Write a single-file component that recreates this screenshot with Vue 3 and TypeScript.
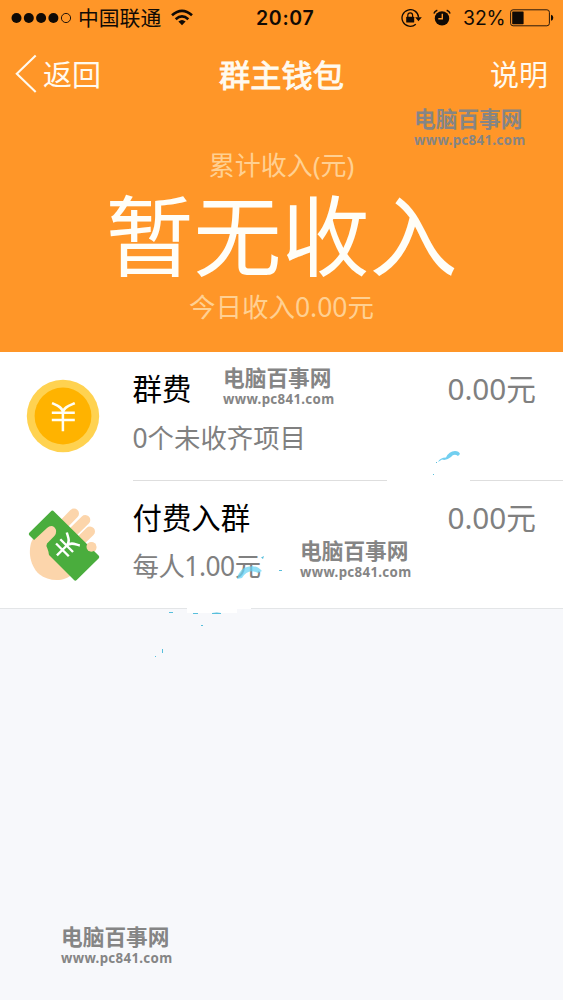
<script setup lang="ts">
interface Entry {
  kind: 'coin' | 'cash'
  title: string
  detail: string
  amount: string
}

interface Mark {
  left: number
  top: number
}

const entries: Entry[] = [
  { kind: 'coin', title: '群费', detail: '0个未收齐项目', amount: '0.00元' },
  { kind: 'cash', title: '付费入群', detail: '每人1.00元', amount: '0.00元' },
]

const marks: Mark[] = [
  { left: 414, top: 106 },
  { left: 223, top: 365 },
  { left: 300, top: 538 },
  { left: 61, top: 924 },
]
</script>

<template>
  <main class="screen">
    <header class="hero">
      <div class="status">
        <svg class="signal" width="62" height="14" viewBox="0 0 62 14">
          <circle v-for="i in 4" :key="i" :cx="5.5 + (i - 1) * 12.3" cy="7" r="5" />
          <circle cx="55" cy="7" r="4.6" fill="none" stroke="#24150a" stroke-width="1" />
        </svg>
        <span class="carrier">中国联通</span>
        <svg class="wifi" width="22" height="17" viewBox="0 0 22 17">
          <g fill="none" stroke="#100a05" stroke-width="2.7">
            <path d="M1 6.2 Q11 -2.5 21 6.2" />
            <path d="M4.7 10.2 Q11 4.7 17.3 10.2" />
          </g>
          <path d="M7.4 12.6 Q11 9.4 14.6 12.6 L11 16.2Z" />
        </svg>
        <time class="clock">20:07</time>
        <div class="indicators">
          <svg width="21" height="19" viewBox="0 0 21 19">
            <path d="M14.8 15.2 A8.3 8.3 0 1 1 17.6 8.4" fill="none" stroke="#100a05" stroke-width="1.3" />
            <path d="M14.1 8.2H20.8L17.5 12.2Z" />
            <rect x="5.2" y="7.7" width="8" height="5.8" rx=".6" />
            <path d="M6.8 8V6.3a2.4 2.4 0 0 1 4.8 0V8" fill="none" stroke="#100a05" stroke-width="1.2" />
          </svg>
          <svg class="alarm" width="18" height="18" viewBox="0 0 18 18">
            <circle cx="9" cy="9.4" r="7.2" />
            <path d="M.9 4.6 Q1.7 2.2 4.3 1.3M17.1 4.6 Q16.3 2.2 13.7 1.3" fill="none" stroke="#100a05" stroke-width="1.5" />
            <path d="M9.3 4.7V9.8H5.3" fill="none" stroke="#ff9628" stroke-width="1.4" />
          </svg>
          <span class="percent">32%</span>
          <svg class="battery" width="44" height="18" viewBox="0 0 44 18">
            <rect x=".6" y=".8" width="38.8" height="16" rx="2.5" fill="none" stroke="#2a190a" stroke-width="1" />
            <rect x="2.2" y="2.4" width="11.4" height="12.8" rx=".6" />
            <path d="M41 5.8q2.3.5 2.3 3t-2.3 3Z" />
          </svg>
        </div>
      </div>

      <nav class="nav">
        <div class="back">
          <svg width="22" height="40" viewBox="0 0 22 40">
            <path d="M20.7 1.5 1.8 19.8 20.7 38" fill="none" stroke="#fffaf0" stroke-width="2.1" />
          </svg>
          <span>返回</span>
        </div>
        <h1>群主钱包</h1>
        <span class="help">说明</span>
      </nav>

      <section class="income">
        <p class="caption">累计收入(元)</p>
        <p class="total">暂无收入</p>
        <p class="today">今日收入0.00元</p>
      </section>
    </header>

    <section class="list">
      <article v-for="entry in entries" :key="entry.title" class="row">
        <svg v-if="entry.kind === 'coin'" class="icon" width="76" height="76" viewBox="0 0 76 76">
          <circle cx="38" cy="38" r="36.2" fill="#ffd250" />
          <circle cx="38" cy="38" r="28.4" fill="#ffb300" />
          <path d="M27 25.2C31 27 37.8 28.8 37.9 35C38 28.8 45.8 27 49.8 25.2M26.8 34.7H49.8M26.8 42.1H49.8M37.9 34V53.2" fill="none" stroke="#fffef5" stroke-width="2.5" />
        </svg>
        <svg v-else class="icon cash" width="76" height="76" viewBox="0 0 76 76">
          <g stroke="#fcd5ab" stroke-width="10" stroke-linecap="round">
            <path d="M34 29 49 13.6M42 38 60.3 20M49 47 65 31.5M60 53 66.5 47.5" />
          </g>
          <path d="M9 37C2 47 4 65 14 74C24 82 40 82 47 74L27 37Z" fill="#fcd5ab" />
          <path d="M25.8 11.4Q27.4 9.8 29 11.4L73.8 55.8Q74.8 57 73.8 58.2L51.7 80Q50.3 81.3 49 80L4.3 35.2Q3.2 34 4.3 32.8Z" fill="#4aad3d" />
          <path d="M8 41 22 28Q26 24.4 29.6 27.4Q33 31 29.4 36L22 43.5Q20.6 46 22.4 48.4Q24 52 24 56L13 57Z" fill="#fcd5ab" />
          <circle cx="66.4" cy="46.8" r="4.9" fill="#fcd5ab" />
          <g transform="translate(40.4 46.9) rotate(45)">
            <path d="M-9.2-11.2C-6-9 0-8 0-1.6C0-8 6-9 9.2-11.2M-9-1.8H9M-9 4.2H9M0-2V12" fill="none" stroke="#fff" stroke-width="2.4" />
          </g>
        </svg>
        <div class="body">
          <div class="heading">
            <h2>{{ entry.title }}</h2>
            <span class="amount">{{ entry.amount }}</span>
          </div>
          <p class="detail" :class="entry.kind">{{ entry.detail }}</p>
        </div>
      </article>
    </section>

    <svg class="strokes" width="563" height="1000" viewBox="0 0 563 1000">
      <path d="M387 477H470V485H387ZM187 604H237V613H187ZM237 605H251V609H237Z" fill="#fff" />
      <path d="M438 462Q440 457.5 446 457.5Q449 451 455 451Q459 451 460 454L458 456Q454 453 451 457Q446 461 442 459.5Z" fill="#72cff0" />
      <path d="M237 579Q239 568 249 566.5Q257 565 262 571L258 573Q248 568 242 578Z" fill="#65d2f4" opacity=".72" />
      <path d="M261 557.5 264 556 263 559ZM279 570h3v1h-3ZM169 612h4v1h-4ZM193 613h5v1h-5ZM212 613q5-1 9 0v1h-9ZM201 625h2v1h-2ZM162 649h1v4h-1ZM155 656h1v1h-1ZM436 462h1v1h-1ZM433 474h1v1h-1Z" fill="#58bfdc" />
    </svg>

    <div
      v-for="mark in marks"
      :key="mark.top"
      class="mark"
      :style="{ left: `${mark.left}px`, top: `${mark.top}px` }"
    >
      <strong>电脑百事网</strong>
      <span>www.pc841.com</span>
    </div>
  </main>
</template>

<style>
body {
  margin: 0;
}
</style>

<style scoped>
.screen {
  position: relative;
  width: 563px;
  height: 1000px;
  overflow: hidden;
  background: #f7f8fb;
  font-family: "Noto Sans", "Noto Sans CJK SC", sans-serif;
  white-space: nowrap;
}

h1,
h2,
p {
  margin: 0;
  font-weight: 400;
}

svg {
  display: block;
  flex: none;
}

.hero {
  height: 352px;
  box-sizing: border-box;
  background: #ff9628;
  color: #fffaf0;
}

.status {
  height: 36px;
  display: grid;
  grid-template-columns: 67px 93px 96px 145px 1fr;
  align-items: center;
  padding-left: 11px;
  box-sizing: border-box;
  color: #100a05;
  fill: #100a05;
}

.carrier {
  font-size: 20.8px;
  line-height: 36px;
}

.wifi {
  margin-top: -1px;
}

.clock,
.percent {
  font-family: Inter, sans-serif;
}

.clock {
  font-size: 19.5px;
  font-weight: 600;
  margin-left: -11px;
  letter-spacing: 0.7px;
}

.indicators {
  display: flex;
  align-items: center;
  margin-left: -11px;
}

.alarm {
  margin-left: 11px;
}

.percent {
  font-size: 19.4px;
  margin-left: 12px;
  width: 47px;
  letter-spacing: -0.1px;
}

.nav {
  height: 76px;
  display: grid;
  grid-template-columns: 1fr 128px 1fr;
  align-items: center;
  padding: 0 15px;
}

.back {
  display: flex;
  align-items: center;
  font-size: 29px;
}

.back span {
  margin: -2px 0 0 6px;
}

h1 {
  font-size: 31.2px;
  -webkit-text-stroke: 0.9px #fffaf0;
  text-align: center;
  margin-top: -2px;
}

.help {
  font-size: 29px;
  text-align: right;
  margin-top: -2px;
}

.income {
  text-align: center;
}

.caption,
.today {
  color: #ffd092;
}

.caption {
  padding-top: 36px;
  font-size: 26px;
  line-height: 34px;
}

.total {
  font-size: 88px;
  line-height: 106px;
  color: #fffef8;
}

.today {
  font-size: 26.5px;
  line-height: 38px;
}

.list {
  background: #fff;
  border-bottom: 1px solid #e3e5e7;
}

.row {
  height: 129px;
  display: flex;
}

.icon {
  margin: 26px 0 0 25px;
}

.cash {
  margin-top: 19px;
  overflow: visible;
}

.body {
  flex: 1;
  margin-left: 31.5px;
  padding: 15px 27px 0 0;
  border-bottom: 1px solid #dedede;
}

.row:last-child {
  height: 127px;
}

.row:last-child .body {
  border: 0;
}

.heading {
  display: flex;
  justify-content: space-between;
  height: 44px;
  line-height: 44px;
}

h2 {
  font-size: 29.4px;
  color: #000;
}

.amount {
  font-size: 29.7px;
  color: #808080;
}

.detail {
  font-size: 26.4px;
  line-height: 36px;
  margin-top: 9px;
  color: #808080;
}

.detail.cash {
  margin-top: 8px;
  letter-spacing: -0.5px;
}

.strokes {
  position: absolute;
  inset: 0;
}

.mark {
  position: absolute;
  color: #858585;
  width: 112px;
}

.mark strong,
.mark span {
  display: block;
  font-weight: 700;
}

.mark strong {
  font-size: 21.7px;
  line-height: 26px;
}

.mark span {
  font-size: 13.3px;
  line-height: 16px;
  letter-spacing: 0.32px;
}
</style>
